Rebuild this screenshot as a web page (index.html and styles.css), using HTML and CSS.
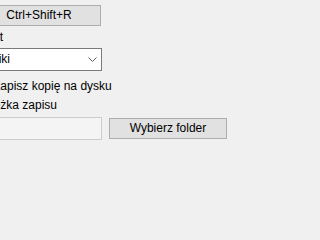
FILE: index.html
```html
<!DOCTYPE html>
<html lang="pl">
<head>
<meta charset="utf-8">
<link rel="stylesheet" href="styles.css">
</head>
<body>
<div class="panel">
  <div class="hotkey">Ctrl+Shift+R</div>
  <div class="label label-format">Format</div>
  <div class="combo">
    <span class="combo-value">Pliki</span>
    <svg class="chev" width="9" height="5" viewBox="0 0 9 5"><polyline points="0.5,0.5 4.5,4.5 8.5,0.5" fill="none" stroke="#5a5a5a" stroke-width="1"/></svg>
  </div>
  <label class="check-row"><span class="check"></span><span>Zapisz kopię na dysku</span></label>
  <div class="label label-path">Ścieżka zapisu</div>
  <div class="path-row">
    <div class="textbox"></div>
    <div class="button">Wybierz folder</div>
  </div>
</div>
</body>
</html>
```

FILE: styles.css
```css
html, body {
  margin: 0;
  background: #f0f0f0;
  overflow: hidden;
}
body {
  font-family: "Liberation Sans", Arial, sans-serif;
  font-size: 12px;
  color: #000;
}
.panel {
  margin-left: -23px;
  padding-top: 5px;
  display: flex;
  flex-direction: column;
  width: 270px;
}
.hotkey {
  box-sizing: border-box;
  width: 124px;
  height: 21px;
  border: 1px solid #adadad;
  background: #e1e1e1;
  text-align: center;
  line-height: 19px;
}
.label {
  line-height: 14px;
  height: 14px;
  white-space: nowrap;
}
.label-format {
  margin-top: 4px;
  margin-left: -12px;
}
.combo {
  box-sizing: border-box;
  margin-top: 4px;
  width: 125px;
  height: 23px;
  border: 1px solid #7a7a7a;
  background: #fff;
  display: flex;
  align-items: center;
  justify-content: space-between;
  padding: 0 4px 0 10px;
  line-height: 21px;
}
.chev {
  display: block;
}
.check-row {
  margin-top: 8px;
  display: flex;
  align-items: center;
  gap: 3px;
  line-height: 14px;
  height: 14px;
  white-space: nowrap;
}
.check {
  box-sizing: border-box;
  width: 13px;
  height: 13px;
  border: 1px solid #333;
  background: #fff;
}
.label-path {
  margin-top: 5px;
}
.path-row {
  margin-top: 5px;
  display: flex;
  align-items: flex-start;
}
.textbox {
  box-sizing: border-box;
  width: 125px;
  height: 23px;
  border: 1px solid #cccccc;
  background: #f4f4f4;
}
.button {
  box-sizing: border-box;
  margin-left: 7px;
  margin-top: 1px;
  width: 118px;
  height: 21px;
  border: 1px solid #adadad;
  background: #e1e1e1;
  text-align: center;
  line-height: 19px;
  white-space: nowrap;
  flex-shrink: 0;
}
```
